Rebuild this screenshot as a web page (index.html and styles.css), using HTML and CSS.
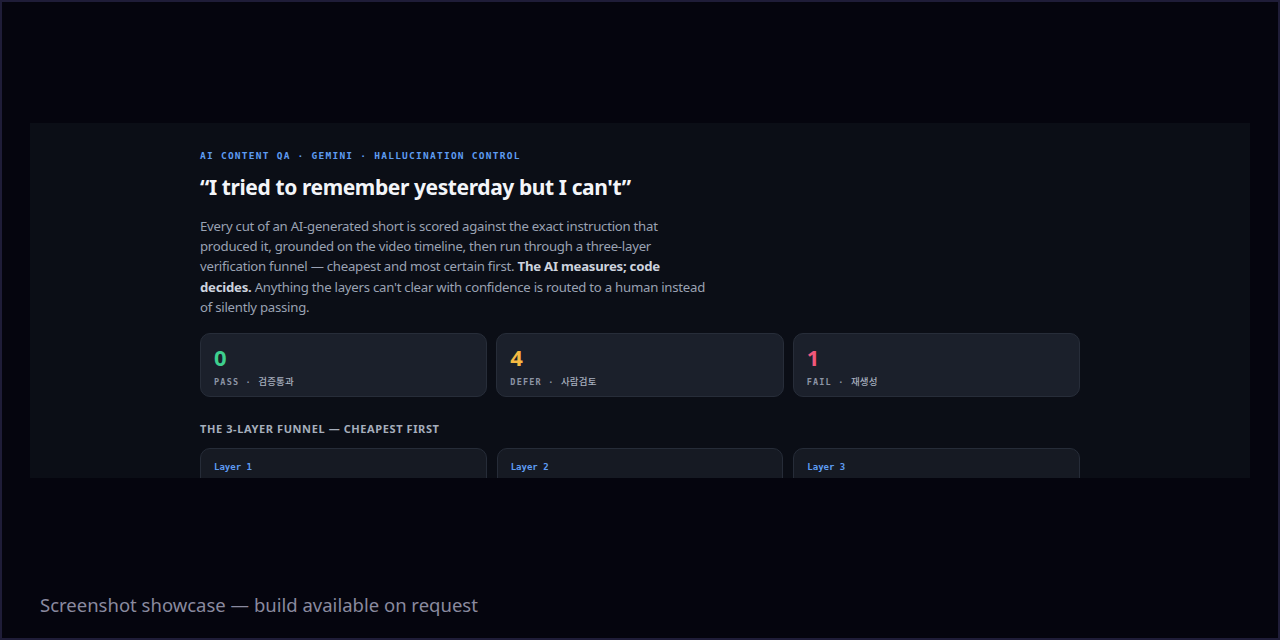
FILE: index.html
```html
<!DOCTYPE html>
<html>
<head>
    <title>AI Content QA</title>
    <link rel="stylesheet" href="styles.css">
</head>
<body>
    <div class="frame">
        <div class="panel">
            <div class="content">
                <div class="eyebrow">AI CONTENT QA · GEMINI · HALLUCINATION CONTROL</div>
                <h1 class="title">“I tried to remember yesterday but I can't”</h1>
                <p class="lead">Every cut of an AI-generated short is scored against the exact instruction that produced it, grounded on the video timeline, then run through a three-layer verification funnel — cheapest and most certain first. <strong>The AI measures; code decides.</strong> Anything the layers can't clear with confidence is routed to a human instead of silently passing.</p>

                <div class="stats">
                    <div class="stat">
                        <div class="stat-num pass">0</div>
                        <div class="stat-label">PASS · <span class="ko">검증통과</span></div>
                    </div>
                    <div class="stat">
                        <div class="stat-num defer">4</div>
                        <div class="stat-label">DEFER · <span class="ko">사람검토</span></div>
                    </div>
                    <div class="stat">
                        <div class="stat-num fail">1</div>
                        <div class="stat-label">FAIL · <span class="ko">재생성</span></div>
                    </div>
                </div>

                <h2 class="section-title">THE 3-LAYER FUNNEL — CHEAPEST FIRST</h2>
                <div class="layers">
                    <div class="layer"><div class="layer-tag">Layer 1</div></div>
                    <div class="layer"><div class="layer-tag">Layer 2</div></div>
                    <div class="layer"><div class="layer-tag">Layer 3</div></div>
                </div>
            </div>
        </div>
        <div class="footer">Screenshot showcase — build available on request</div>
    </div>
</body>
</html>
```

FILE: styles.css
```css
html, body {
    margin: 0;
    background: #05050e;
}

.frame {
    height: 640px;
    box-sizing: border-box;
    border: 2px solid #1f1d38;
    display: flex;
    flex-direction: column;
    padding-top: 121px;
    font-family: "Noto Sans", "Noto Sans CJK KR", sans-serif;
}

.panel {
    margin: 0 28px;
    height: 355px;
    overflow: hidden;
    background: #0b0e16;
}

.content {
    width: 880px;
    margin: 0 auto;
    padding-top: 26px;
}

.eyebrow {
    font-family: "DejaVu Sans Mono", monospace;
    font-size: 9.5px;
    font-weight: bold;
    letter-spacing: 1.25px;
    color: #5e9cf2;
    line-height: 14px;
}

.title {
    margin: 10px 0 0;
    font-size: 21px;
    line-height: 28px;
    font-weight: 700;
    letter-spacing: -0.4px;
    color: #f3f5f9;
}

.lead {
    margin: 15px 0 0;
    max-width: 512px;
    font-size: 13.2px;
    line-height: 20.2px;
    letter-spacing: -0.25px;
    color: #9aa2b3;
}

.lead strong {
    color: #cdd3de;
}

.stats {
    margin-top: 16px;
    display: grid;
    grid-template-columns: repeat(3, 1fr);
    gap: 9px;
}

.stat {
    height: 64px;
    box-sizing: border-box;
    padding: 9px 13px;
    background: #1b202b;
    border: 1px solid #272d39;
    border-radius: 10px;
}

.stat-num {
    font-size: 22px;
    font-weight: 700;
    line-height: 28px;
}

.pass { color: #3ecf8e; }
.defer { color: #f5b942; }
.fail { color: #f0577a; }

.stat-label {
    margin-top: 3px;
    font-family: "DejaVu Sans Mono", monospace;
    font-size: 8.5px;
    font-weight: bold;
    letter-spacing: 1.2px;
    color: #8c94a5;
}

.stat-label .ko {
    font-family: "Noto Sans CJK KR", sans-serif;
    font-size: 9.5px;
    font-weight: 500;
    letter-spacing: 0.2px;
    color: #a7afbe;
}

.section-title {
    margin: 25px 0 0;
    font-size: 11px;
    font-weight: 700;
    letter-spacing: 0.6px;
    color: #a6aebc;
    line-height: 14px;
}

.layers {
    margin-top: 12px;
    display: grid;
    grid-template-columns: repeat(3, 1fr);
    gap: 10px;
}

.layer {
    height: 80px;
    box-sizing: border-box;
    padding: 12px 13px;
    background: #161a23;
    border: 1px solid #262c38;
    border-radius: 10px;
}

.layer-tag {
    font-family: "DejaVu Sans Mono", monospace;
    font-size: 9px;
    font-weight: bold;
    color: #5e9cf2;
    line-height: 12px;
}

.footer {
    margin-top: auto;
    padding: 0 0 20px 38px;
    font-size: 18.5px;
    line-height: 26px;
    color: #8a8a9f;
}
```
